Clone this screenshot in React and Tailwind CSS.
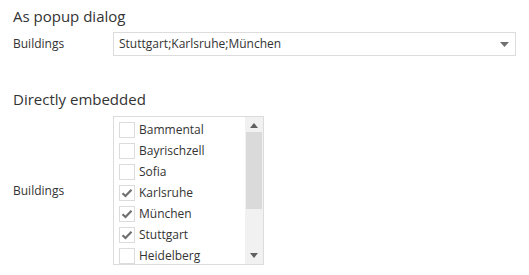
import React from "react";

const items = [
  ["Bammental", false],
  ["Bayrischzell", false],
  ["Sofia", false],
  ["Karlsruhe", true],
  ["München", true],
  ["Stuttgart", true],
  ["Heidelberg", false],
];

function Check() {
  return (
    <svg width="12" height="10" viewBox="0 0 12 10">
      <path d="M1.5 5.2 L4.5 8 L10.5 1.8" fill="none" stroke="#707070" strokeWidth="2.2" />
    </svg>
  );
}

function Tri({ up }) {
  return (
    <svg width="8" height="5" viewBox="0 0 8 5">
      {up ? <path d="M0 5 L4 0 L8 5 Z" fill="#606060" /> : <path d="M0 0 L8 0 L4 5 Z" fill="#606060" />}
    </svg>
  );
}

export default function App() {
  return (
    <div className="w-[529px] h-[275px] bg-white text-[#333] pl-[13px] pt-[5px]" style={{ fontFamily: "'Open Sans', sans-serif" }}>
      <div className="text-[15px] leading-[22px]">As popup dialog</div>
      <div className="flex items-center mt-[5px]">
        <div className="w-[100px] text-[12px]">Buildings</div>
        <div className="w-[403px] h-[24px] border border-[#dcdcdc] flex items-center justify-between pl-[5px] pr-[6px] text-[12px]">
          <span>Stuttgart;Karlsruhe;München</span>
          <svg width="9" height="5" viewBox="0 0 9 5"><path d="M0 0 L9 0 L4.5 5 Z" fill="#707070" /></svg>
        </div>
      </div>
      <div className="text-[15px] leading-[22px] mt-[32px]">Directly embedded</div>
      <div className="flex items-center mt-[6px]">
        <div className="w-[100px] text-[12px]">Buildings</div>
        <div className="w-[151px] h-[149px] border border-[#dcdcdc] flex">
          <div className="flex-1 pt-[2px] pl-[5px] overflow-hidden">
            {items.map(([name, checked]) => (
              <div key={name} className="h-[21px] flex items-center gap-[4px] text-[12px]">
                <div className="w-[16px] h-[16px] border border-[#dcdcdc] flex items-center justify-center shrink-0">
                  {checked && <Check />}
                </div>
                <span>{name}</span>
              </div>
            ))}
          </div>
          <div className="w-[18px] bg-[#f1f1f1] flex flex-col">
            <div className="h-[15px] flex items-center justify-center pt-[2px]"><Tri up /></div>
            <div className="mx-[1px] h-[77px] bg-[#dadada]"></div>
            <div className="flex-1"></div>
            <div className="h-[17px] flex items-center justify-center"><Tri /></div>
          </div>
        </div>
      </div>
    </div>
  );
}
